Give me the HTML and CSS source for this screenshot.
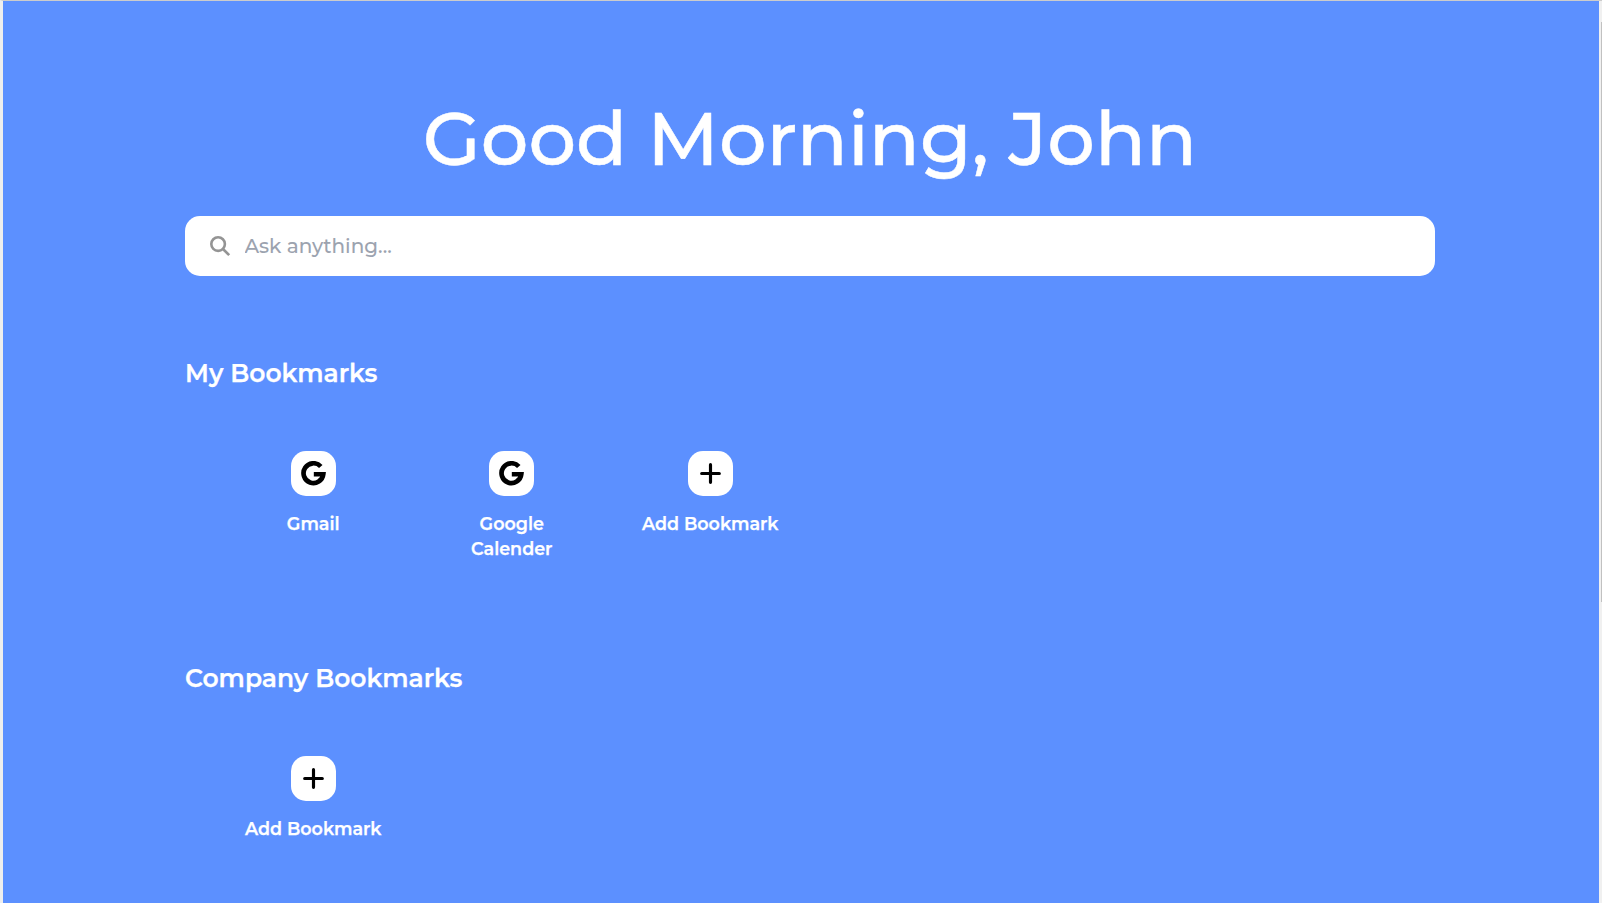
FILE: index.html
```html
<!DOCTYPE html>
<html lang="en">
<head>
<meta charset="utf-8">
<title>Bookmarks</title>
<link rel="stylesheet" href="styles.css">
</head>
<body>
<svg class="defs" width="0" height="0" aria-hidden="true">
  <symbol id="google" viewBox="0 0 24 24"><path d="M19 5.3A9.5 9.5 0 1 0 21.4 12.7H12.3" fill="none" stroke="#000" stroke-width="4.5"/></symbol>
  <symbol id="plus" viewBox="0 0 20 20"><path d="M10 1.6V18.4M1.6 10H18.4" fill="none" stroke="#000" stroke-width="3" stroke-linecap="round"/></symbol>
</svg>
<div class="frame">
  <main class="page">
    <h1 class="greeting">Good Morning, John</h1>
    <label class="search">
      <svg class="search-icon" viewBox="0 0 20 20"><circle cx="8.1" cy="8.1" r="6.8"/><path d="M13 13L19.2 19.2"/></svg>
      <input class="search-input" type="text" placeholder="Ask anything...">
    </label>
    <section class="group">
      <h2 class="heading">My Bookmarks</h2>
      <div class="grid">
        <a class="item"><span class="tile"><svg class="g"><use href="#google"/></svg></span><span class="label">Gmail</span></a>
        <a class="item"><span class="tile"><svg class="g"><use href="#google"/></svg></span><span class="label">Google<br>Calender</span></a>
        <a class="item"><span class="tile"><svg class="plus"><use href="#plus"/></svg></span><span class="label">Add Bookmark</span></a>
      </div>
    </section>
    <section class="group">
      <h2 class="heading">Company Bookmarks</h2>
      <div class="grid">
        <a class="item"><span class="tile"><svg class="plus"><use href="#plus"/></svg></span><span class="label">Add Bookmark</span></a>
      </div>
    </section>
  </main>
  <div class="scroll"><div class="thumb"></div></div>
</div>
</body>
</html>
```
FILE: styles.css
```css
* { box-sizing: border-box; }
body { margin: 0; overflow: hidden; font-family: Montserrat, Inter, sans-serif; color: #fff; }
.defs { display: block; }
.frame { display: flex; height: 903px; border-top: 1px solid #ccc; border-left: 3px solid #eee; }
.page { flex: 1; background: #5c90ff; padding: 92px 164px 0 182px; }
.greeting { margin: 0; height: 90px; line-height: 90px; font-size: 75px; font-weight: 500; text-align: center; white-space: nowrap; -webkit-text-stroke: .5px #fff; }
.search { display: flex; align-items: center; gap: 14.5px; margin-top: 33px; height: 60px; padding: 0 25px; border-radius: 15px; background: #fff; }
.search-icon { width: 20px; height: 20px; fill: none; stroke: #949494; stroke-width: 2.6; overflow: visible; }
.search-input { flex: 1; border: 0; padding: 0; outline: 0; background: none; font: 500 20px Montserrat, Inter, sans-serif; }
.search-input::placeholder { color: #9ca3af; opacity: 1; }
.group { height: 305px; padding-top: 78px; }
.heading { margin: 0; height: 38px; line-height: 38px; font-size: 25px; font-weight: 600; white-space: nowrap; -webkit-text-stroke: .25px #fff; }
.grid { display: grid; grid-template-columns: repeat(6, 198.5px); padding: 59px 0 0 29px; }
.item { display: flex; flex-direction: column; align-items: center; gap: 15px; }
.tile { display: flex; align-items: center; justify-content: center; width: 45px; height: 45px; border-radius: 15px; background: #fff; }
.g { width: 25px; height: 25px; }
.plus { width: 21px; height: 21px; }
.label { font-size: 17.55px; line-height: 25px; font-weight: 600; text-align: center; white-space: nowrap; -webkit-text-stroke: .25px #fff; }
.scroll { width: 3px; background: #f0f0f0; padding: 21px 0 0 2px; }
.thumb { height: 580px; background: #c1c1c1; }
```
